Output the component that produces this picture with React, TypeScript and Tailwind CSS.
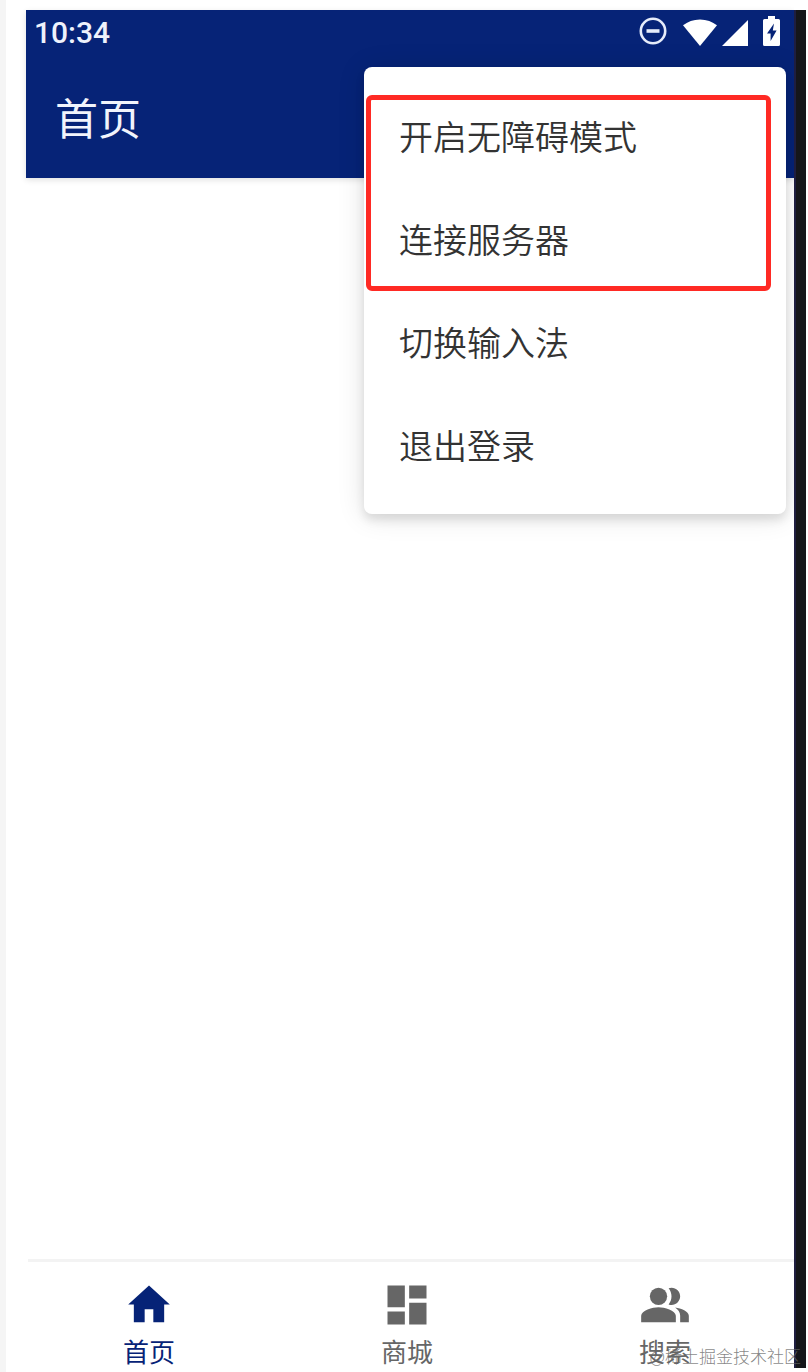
import { clsx } from "clsx";
import { memo, useState, type ReactNode } from "react";

const DoNotDisturbIcon = () => (
  <svg width="28" height="28" viewBox="0 0 28 28" fill="none" stroke="#e6ecfa" aria-hidden="true">
    <circle cx="14" cy="14" r="12.2" strokeWidth="2.6" />
    <path d="M7.500 14h13" strokeWidth="3.6" />
  </svg>
);

const WifiIcon = () => (
  <svg width="34" height="27" viewBox="0 0 34 27" fill="#fff" aria-hidden="true">
    <path d="M0 6.2C4.6 2.6 10.4.4 17 .4s12.400 2.200 17 5.800L17 27z" />
  </svg>
);

const SignalIcon = () => (
  <svg width="26" height="26" viewBox="0 0 26 26" fill="#fff" aria-hidden="true">
    <path d="M26 0v26H0z" />
  </svg>
);

const BatteryIcon = () => (
  <svg width="17" height="30" viewBox="0 0 17 30" aria-hidden="true">
    <path
      fill="#fff"
      d="M5 0h7v3h3.500A1.500 1.500 0 0 1 17 4.500v24a1.500 1.500 0 0 1-1.500 1.500h-14A1.500 1.500 0 0 1 0 28.500v-24A1.500 1.500 0 0 1 1.500 3H5z"
    />
    <path fill="#062377" d="M11 7.500 4 17.500h3.600V25l6-10.500H9.800z" />
  </svg>
);

const HomeIcon = () => (
  <svg className="size-[52px]" viewBox="0 0 24 24" fill="currentColor" aria-hidden="true">
    <path d="M10 20v-6h4v6h5v-8.200h2.600L12 3l-9.600 8.800H5V20z" />
  </svg>
);

const DashboardIcon = () => (
  <svg className="size-[52px]" viewBox="0 0 24 24" fill="currentColor" aria-hidden="true">
    <path d="M3 13h8V3H3v10zm0 8h8v-6H3v6zm10 0h8V11h-8v10zm0-18v6h8V3h-8z" />
  </svg>
);

const PeopleIcon = () => (
  <svg className="size-[52px]" viewBox="0 0 24 24" fill="currentColor" aria-hidden="true">
    <path d="M16.670 13.130C18.040 14.060 19 15.320 19 17v3h4v-3c0-2.180-3.570-3.470-6.330-3.870z" />
    <circle cx="9" cy="8" r="4" />
    <path d="M15 12c2.210 0 4-1.790 4-4s-1.790-4-4-4c-.47 0-.91.1-1.330.24C14.500 5.270 15 6.580 15 8s-.5 2.730-1.330 3.760c.42.14.86.24 1.330.24zM9 13c-2.670 0-8 1.340-8 4v3h16v-3c0-2.660-5.330-4-8-4z" />
  </svg>
);

const menuItems = ["开启无障碍模式", "连接服务器", "切换输入法", "退出登录"];

const tabs: { id: string; label: string; icon: ReactNode }[] = [
  { id: "home", label: "首页", icon: <HomeIcon /> },
  { id: "mall", label: "商城", icon: <DashboardIcon /> },
  { id: "search", label: "搜索", icon: <PeopleIcon /> },
];

const StatusBar = memo(() => (
  <div className="flex h-[46px] items-center justify-between pr-[14px] pl-2">
    <span className="font-[Roboto,sans-serif] text-[30px] leading-none font-medium text-[#eef2fc]">
      10:34
    </span>
    <div className="flex items-center pb-1">
      <DoNotDisturbIcon />
      <div className="ml-4 flex items-end gap-[5px]">
        <WifiIcon />
        <SignalIcon />
        <div className="ml-[10px]">
          <BatteryIcon />
        </div>
      </div>
    </div>
  </div>
));

StatusBar.displayName = "StatusBar";

const OverflowMenu = memo(() => (
  <div
    role="menu"
    className="absolute top-[57px] right-2 z-10 w-[422px] rounded-lg bg-white pt-[17px] pb-[18px] shadow-[0_6px_10px_rgba(0,0,0,0.1),0_2px_28px_rgba(0,0,0,0.12)]"
  >
    {menuItems.map((item) => (
      <button
        key={item}
        type="button"
        role="menuitem"
        className="flex h-[103px] w-full items-center px-[35px] text-[34px] leading-none font-[350] text-[#333]"
      >
        {item}
      </button>
    ))}
    {/* highlight around the first two entries */}
    <div className="pointer-events-none absolute top-7 right-[15px] left-0.5 h-[196px] rounded-md border-5 border-[#ff2a24]" />
  </div>
));

OverflowMenu.displayName = "OverflowMenu";

export default function App() {
  const [activeTab, setActiveTab] = useState("home");

  return (
    <div className="relative flex min-h-screen bg-white pr-0.5 font-['Noto_Sans_CJK_SC',sans-serif]">
      <div className="w-[6px] shrink-0 bg-[#f5f5f5]" />

      <div className="ml-[14px] flex min-w-0 flex-1 flex-col overflow-hidden pt-[10px]">
        <header className="relative ml-[6px] bg-[#062377] pb-0.5 shadow-[0_2px_6px_rgba(0,0,0,0.12)]">
          <StatusBar />
          <div className="flex h-[120px] items-center px-[29px]">
            <h1 className="text-[43px] leading-none text-[#f1f4fc]">首页</h1>
          </div>
          <OverflowMenu />
        </header>

        <main className="flex-1" />

        <nav className="flex flex-col">
          <div className="ml-2 h-[3px] bg-[#f3f3f3]" />
          <div className="grid grid-cols-3 pt-[17px] pb-0.5">
            {tabs.map((tab) => (
              <button
                key={tab.id}
                type="button"
                onClick={() => setActiveTab(tab.id)}
                className={clsx(
                  "flex flex-col items-center",
                  activeTab === tab.id ? "text-[#062377]" : "text-[#666]"
                )}
              >
                {tab.icon}
                <span className="text-[26px] leading-[39px]">{tab.label}</span>
              </button>
            ))}
          </div>
        </nav>
      </div>

      <div className="mt-[10px] mb-1 w-3 shrink-0 border-l-2 border-[#1f1e40] bg-[#15161a]" />

      <span className="absolute right-[7px] bottom-1 text-[17px] leading-6 font-light text-[#666]/80">
        @稀土掘金技术社区
      </span>
    </div>
  );
}
